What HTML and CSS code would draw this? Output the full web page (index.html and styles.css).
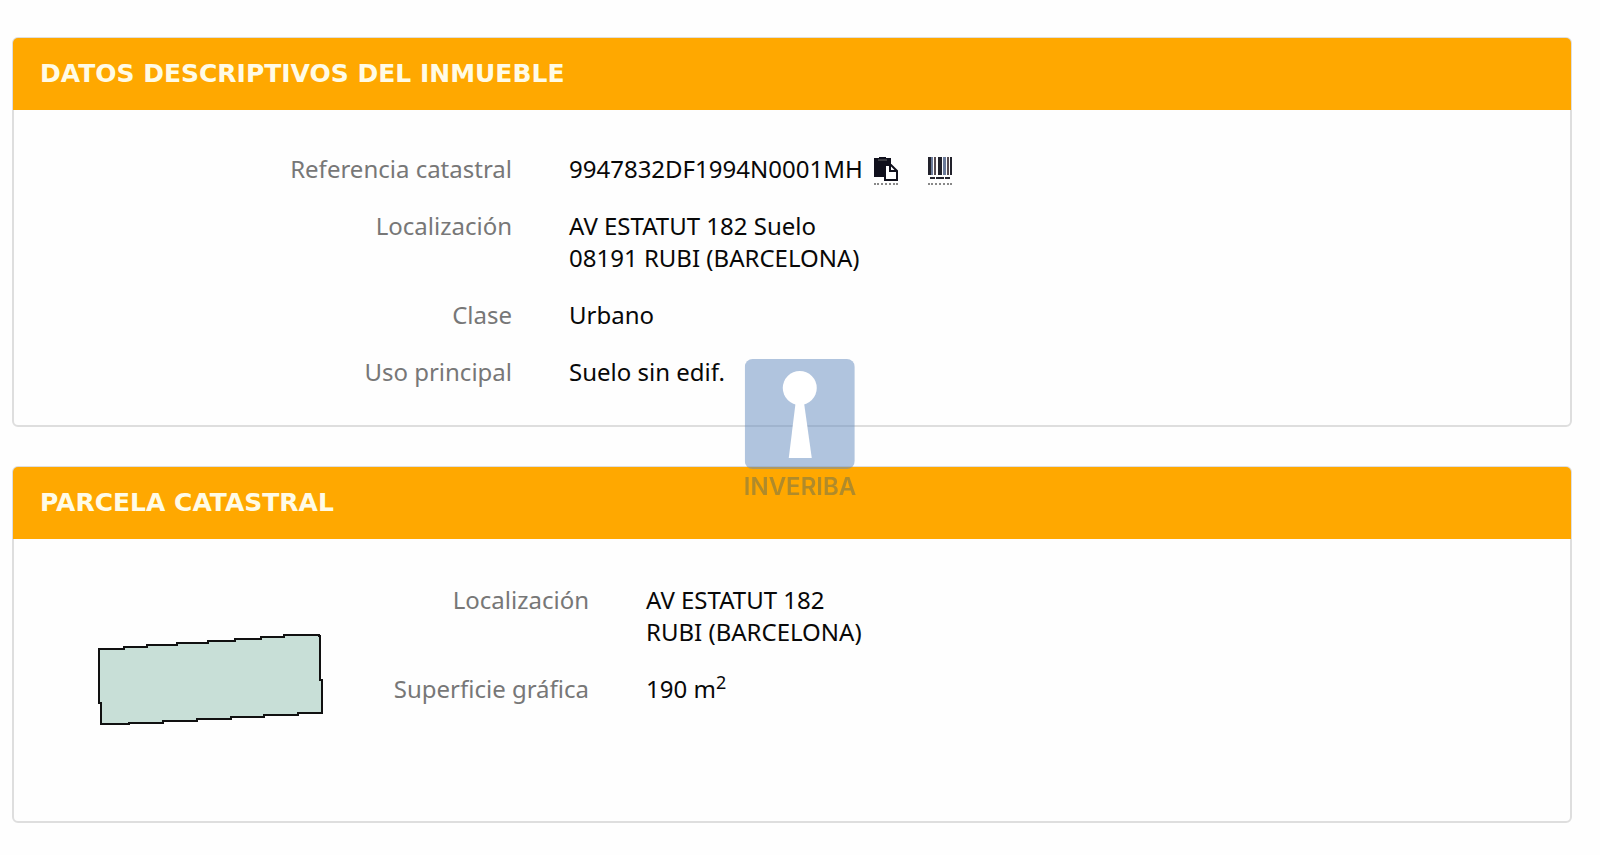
FILE: index.html
```html
<!DOCTYPE html>
<html lang="es">
<head>
  <meta charset="UTF-8" />
  <meta name="viewport" content="width=device-width, initial-scale=1.0"/>
  <title>Datos descriptivos del inmueble</title>
  <link rel="stylesheet" href="styles.css">
</head>
<body>
  <main class="page">
    <section class="panel">
      <h2 class="panel-heading">DATOS DESCRIPTIVOS DEL INMUEBLE</h2>
      <div class="panel-body">
        <dl class="datos">
          <dt>Referencia catastral</dt>
          <dd class="referencia">
            <span>9947832DF1994N0001MH</span>
            <button type="button" class="icon-button" aria-label="Copiar referencia catastral">
              <svg width="24" height="24" viewBox="0 0 24 24">
                <path d="M0 1h5V0h7v1h5v6h-6v13H0z" fill="#10101c"/>
                <path d="M4 3h9" stroke="#666" stroke-width="1"/>
                <path d="M11 8h6l6 6v9H11z" fill="#fff" stroke="#10101c" stroke-width="2"/>
                <path d="M16 8v6h7" fill="none" stroke="#10101c" stroke-width="2"/>
              </svg>
            </button>
            <button type="button" class="icon-button" aria-label="Código de barras">
              <svg width="24" height="24" viewBox="0 0 24 24">
                <path d="M0 0h3v18H0zM10 0h4v18h-4zM22 0h2v18h-2z" fill="#22222c"/>
                <path d="M3 0h2v18H3zM15 0h3v18h-3z" fill="#6b7a99"/>
                <path d="M6 0h2v18H6zM19 0h2v18h-2z" fill="#554a50"/>
                <path d="M2 21h5M8 21h8M17 21h5" stroke="#22222c" stroke-width="2"/>
              </svg>
            </button>
          </dd>
          <dt>Localización</dt>
          <dd>AV ESTATUT 182 Suelo<br>08191 RUBI (BARCELONA)</dd>
          <dt>Clase</dt>
          <dd>Urbano</dd>
          <dt>Uso principal</dt>
          <dd>Suelo sin edif.</dd>
        </dl>
      </div>
    </section>

    <section class="panel">
      <h2 class="panel-heading">PARCELA CATASTRAL</h2>
      <div class="panel-body parcela">
        <svg class="plano" width="228" height="96" viewBox="0 0 228 96" role="img" aria-label="Plano de la parcela">
          <path d="M3 17H28V15H51V13H81V11H112V9H139V7H165V5H188V3H223V4H224V48H226V81H202V83H168V85H135V87H101V89H67V91H33V92H5V71H3Z"
            fill="#c8dfd7" stroke="#111" stroke-width="2"/>
        </svg>
        <dl class="datos">
          <dt>Localización</dt>
          <dd>AV ESTATUT 182<br>RUBI (BARCELONA)</dd>
          <dt>Superficie gráfica</dt>
          <dd>190 m<sup>2</sup></dd>
        </dl>
      </div>
    </section>
  </main>

  <div class="watermark">
    <svg width="110" height="110" viewBox="0 0 110 110">
      <rect width="110" height="110" rx="8" fill="#6189bd" fill-opacity="0.5"/>
      <path d="M51 42h8l8 57H44z" fill="#fff"/>
      <circle cx="55" cy="29" r="17" fill="#fff"/>
    </svg>
    <span>INVERIBA</span>
  </div>
</body>
</html>
```

FILE: styles.css
```css
* {
  box-sizing: border-box;
}

body {
  margin: 0;
  background: #fefefe;
  color: #080808;
  font-family: 'Noto Sans', Verdana, sans-serif;
  font-size: 24px;
  line-height: 32px;
}

.page {
  display: flex;
  flex-direction: column;
  gap: 39px;
  padding: 37px 28px 32px 12px;
}

.panel {
  background: #fefefe;
  border: 2px solid #dedede;
  border-radius: 6px;
}

.panel-heading {
  margin: -1px -1px 0;
  padding: 20px 27px;
  border-radius: 5px 5px 0 0;
  background: #ffa800;
  color: #fffbe6;
  font-family: 'DejaVu Sans', Verdana, sans-serif;
  font-size: 25px;
  font-weight: 700;
}

.panel-body {
  padding: 43px 28px 37px;
}

.datos {
  display: grid;
  grid-template-columns: 470px 1fr;
  gap: 25px 57px;
  margin: 0;
}

.datos dt {
  color: #777;
  text-align: right;
}

.datos dd {
  margin: 0;
}

.referencia {
  display: flex;
  align-items: flex-end;
}

.icon-button {
  height: 30px;
  margin: 0 30px 0 11px;
  padding: 0;
  border: 0;
  border-bottom: 2px dotted #888;
  background: none;
  line-height: 0;
  cursor: pointer;
}

.icon-button + .icon-button {
  margin: 0;
}

/* plano + datos */
.parcela {
  display: flex;
  align-items: flex-start;
  padding: 45px 28px 93px 82px;
}

.plano {
  margin-top: 48px;
  flex-shrink: 0;
}

.parcela .datos {
  flex: 1;
  grid-template-columns: 265px 1fr;
}

.parcela sup {
  font-size: 18px;
  line-height: 0;
}

.watermark {
  position: fixed;
  top: 50%;
  left: 50%;
  display: flex;
  flex-direction: column;
  align-items: center;
  gap: 8px;
  transform: translate(-50%, -50%);
  pointer-events: none;
}

.watermark span {
  color: rgba(97, 110, 84, 0.5);
  font-family: Inter, sans-serif;
  font-size: 24px;
  font-weight: 600;
  line-height: 20px;
}
```
